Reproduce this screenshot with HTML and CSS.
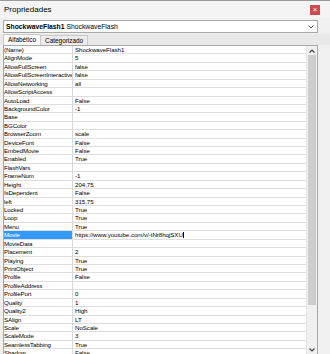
FILE: index.html
```html
<!DOCTYPE html>
<html lang="pt">

<head>
    <meta charset="UTF-8">
    <title>Propriedades</title>
    <link rel="stylesheet" href="styles.css">
</head>

<body>
    <div class="window">
        <div class="titlebar">
            <span class="title">Propriedades</span>
            <span class="close">&#215;</span>
        </div>

        <div class="combo">
            <span><b>ShockwaveFlash1</b> ShockwaveFlash</span>
            <svg class="chev" width="6" height="4" viewBox="0 0 6 4">
                <path d="M0.5 0.5 L3 3 L5.5 0.5" fill="none" stroke="#555" stroke-width="1"/>
            </svg>
        </div>

        <div class="tabs">
            <div class="tab active">Alfabético</div>
            <div class="tab">Categorizado</div>
        </div>

        <div class="grid-box">
            <div class="props" id="props"></div>
            <div class="scrollbar">
                <svg class="arrow" width="6" height="4" viewBox="0 0 6 4">
                    <path d="M0.5 3.5 L3 1 L5.5 3.5" fill="none" stroke="#444" stroke-width="1.2"/>
                </svg>
                <div class="track"><div class="thumb"></div></div>
                <svg class="arrow" width="6" height="4" viewBox="0 0 6 4">
                    <path d="M0.5 0.5 L3 3 L5.5 0.5" fill="none" stroke="#444" stroke-width="1.2"/>
                </svg>
            </div>
        </div>
    </div>

    <script>
        // name, value
        let rows = [
            ['(Name)', 'ShockwaveFlash1'],
            ['AlignMode', '5'],
            ['AllowFullScreen', 'false'],
            ['AllowFullScreenInteractive', 'false'],
            ['AllowNetworking', 'all'],
            ['AllowScriptAccess', ''],
            ['AutoLoad', 'False'],
            ['BackgroundColor', '-1'],
            ['Base', ''],
            ['BGColor', ''],
            ['BrowserZoom', 'scale'],
            ['DeviceFont', 'False'],
            ['EmbedMovie', 'False'],
            ['Enabled', 'True'],
            ['FlashVars', ''],
            ['FrameNum', '-1'],
            ['Height', '204,75'],
            ['IsDependent', 'False'],
            ['left', '315,75'],
            ['Locked', 'True'],
            ['Loop', 'True'],
            ['Menu', 'True'],
            ['Movie', 'https://www.youtube.com/v/-tNr8hqjSXU'],
            ['MovieData', ''],
            ['Placement', '2'],
            ['Playing', 'True'],
            ['PrintObject', 'True'],
            ['Profile', 'False'],
            ['ProfileAddress', ''],
            ['ProfilePort', '0'],
            ['Quality', '1'],
            ['Quality2', 'High'],
            ['SAlign', 'LT'],
            ['Scale', 'NoScale'],
            ['ScaleMode', '3'],
            ['SeamlessTabbing', 'True'],
            ['Shadow', 'False']
        ];

        let props = document.getElementById('props');
        rows.forEach(function (r) {
            let name = document.createElement('div');
            name.className = 'cell name';
            name.textContent = r[0];
            let value = document.createElement('div');
            value.className = 'cell value';
            value.textContent = r[1];
            if (r[0] == 'Movie') {
                name.classList.add('selected');
                value.classList.add('editing');
            }
            props.appendChild(name);
            props.appendChild(value);
        });
    </script>
</body>

</html>
```

FILE: styles.css
```css
body {
    margin: 0;
    background: #f0f0f0;
    font-family: "Liberation Sans Narrow", "Liberation Sans", Arial, sans-serif;
    color: #000;
}

.window {
    width: 330px;
    height: 354px;
    overflow: hidden;
    border-top: 1px solid #9a9a9a;
    box-sizing: border-box;
}

.titlebar {
    display: flex;
    align-items: center;
    justify-content: space-between;
    height: 17px;
    padding: 0 10px 0 4px;
    background: #f4f4f4;
    font-family: "Liberation Sans", Arial, sans-serif;
    font-size: 8px;
}

.close {
    display: flex;
    align-items: center;
    justify-content: center;
    width: 10px;
    height: 10px;
    background: #cd4b50;
    color: #fff;
    font-size: 8px;
    line-height: 1;
}

.combo {
    display: flex;
    align-items: center;
    justify-content: space-between;
    height: 11px;
    margin: 2px 12px 0 3px;
    padding: 0 3px 0 2px;
    background: #fff;
    border: 1px solid #a8a8a8;
    font-size: 6.8px;
}

.tabs {
    display: flex;
    align-items: flex-end;
    height: 11px;
    padding: 0 0 0 3px;
    background: #e8e8e8;
    margin-top: 1px;
}

.tab {
    height: 9px;
    line-height: 9px;
    padding: 0 4px;
    font-size: 6.4px;
    border: 1px solid #c8c8c8;
    border-bottom: none;
    background: #ececec;
}

.tab.active {
    height: 10px;
    background: #fafafa;
    border-right: none;
}

.grid-box {
    display: flex;
    margin: 0 12px 0 3px;
    height: 310px;
    border: 1px solid #a8a8a8;
    background: #fff;
    box-sizing: border-box;
    overflow: hidden;
}

.props {
    flex: 1;
    display: grid;
    grid-template-columns: 69px 1fr;
    grid-auto-rows: 8.43px;
    align-content: start;
}

.cell {
    font-size: 6.2px;
    letter-spacing: -0.06px;
    line-height: 7.4px;
    padding-left: 1px;
    border-bottom: 1px solid #dedede;
    white-space: nowrap;
    overflow: hidden;
}

.name {
    padding-left: 0;
    letter-spacing: -0.14px;
    border-right: 1px solid #d8d8d8;
}

.value {
    padding-left: 2px;
}

.selected {
    background: #3399ff;
    color: #fff;
}

.editing::after {
    content: "";
    display: inline-block;
    width: 1px;
    height: 6px;
    background: #000;
    vertical-align: -1px;
}

.scrollbar {
    display: flex;
    flex-direction: column;
    align-items: center;
    width: 10px;
    background: #f0f0f0;
    border-left: 1px solid #e4e4e4;
}

.arrow {
    margin: 3px 0 2px;
}

.track {
    flex: 1;
    width: 100%;
}

.thumb {
    height: 250px;
    margin: 0 1px;
    background: #cdcdcd;
}
```
